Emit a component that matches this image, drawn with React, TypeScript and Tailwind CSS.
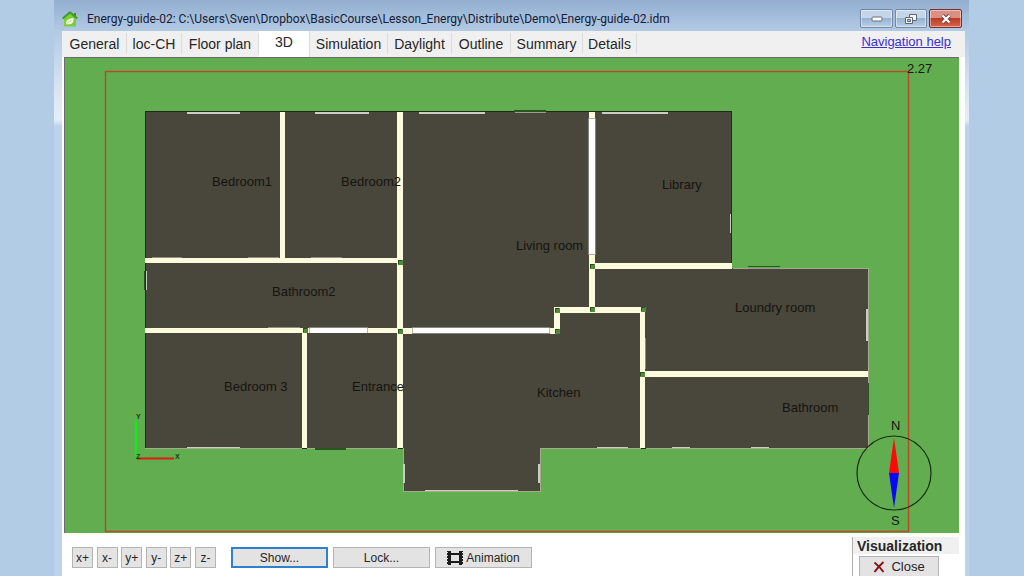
import { useState } from "react";

const tabs = [
  { name: "General", width: "w-16" },
  { name: "loc-CH", width: "w-[55px]" },
  { name: "Floor plan", width: "w-[77px]" },
  { name: "3D", width: "w-[51px]" },
  { name: "Simulation", width: "w-[78px]" },
  { name: "Daylight", width: "w-16" },
  { name: "Outline", width: "w-[59px]" },
  { name: "Summary", width: "w-[72px]" },
  { name: "Details", width: "w-[54px]" },
];

const rooms = [
  { name: "Bedroom1", x: 212, y: 186 },
  { name: "Bedroom2", x: 341, y: 186 },
  { name: "Library", x: 662, y: 189 },
  { name: "Living room", x: 516, y: 250 },
  { name: "Bathroom2", x: 272, y: 296 },
  { name: "Loundry room", x: 735, y: 312 },
  { name: "Bedroom 3", x: 224, y: 391 },
  { name: "Entrance", x: 352, y: 391 },
  { name: "Kitchen", x: 537, y: 397 },
  { name: "Bathroom", x: 782, y: 412 },
];

// x, y, width, height
const walls = [
  [280, 112, 5, 147],
  [397, 112, 6, 336],
  [145, 258, 252, 5],
  [145, 328, 252, 5],
  [302, 333, 5, 115],
  [403, 328, 156, 6],
  [554, 307, 6, 27],
  [554, 307, 91, 6],
  [589, 112, 6, 195],
  [589, 263, 143, 6],
  [640, 307, 5, 141],
  [645, 371, 223, 6],
];

const openings = [
  [309, 328, 59, 5],
  [412, 328, 138, 6],
  [589, 118, 6, 137],
];

const windows = [
  [187, 112, 53, 2],
  [315, 112, 54, 2],
  [419, 112, 66, 2],
  [602, 112, 66, 2],
  [146, 271, 1, 19],
  [730, 214, 1, 19],
  [866, 309, 2, 32],
  [187, 447, 53, 1],
  [597, 447, 31, 1],
  [672, 447, 18, 1],
  [751, 447, 18, 1],
  [403, 464, 2, 19],
  [538, 464, 2, 19],
  [425, 490, 93, 1],
];

const doors = [
  [514, 110, 32, 2],
  [748, 266, 32, 1],
  [315, 448, 31, 2],
  [868, 383, 1, 32],
  [144, 271, 1, 19],
];

const joints = [
  [398, 260],
  [303, 328],
  [398, 329],
  [555, 308],
  [555, 329],
  [590, 264],
  [590, 307],
  [641, 307],
  [640, 372],
];

function Rects({ items, className }: { items: number[][]; className: string }) {
  return (
    <g className={className}>
      {items.map(([x, y, w, h], i) => (
        <rect key={i} x={x} y={y} width={w} height={h} />
      ))}
    </g>
  );
}

function FloorPlan() {
  return (
    <svg
      viewBox="65 58 894 475"
      className="block w-full h-auto bg-[#62ad4f] font-['Liberation_Sans',Arial,sans-serif]"
    >
      <g shapeRendering="crispEdges">
        <path
          d="M145 112H732V268H868V448H540V491H403V448H145Z"
          fill="#49463c"
        />
        <path d="M732.5 268.5H868.5V448.5H540.5V491.5H403.5V448.5H145" fill="none" stroke="#a3ad8b" />
        <path d="M145.5 448V111.5H731.5V263" fill="none" stroke="#1d2b17" />
        <Rects items={walls} className="fill-[#fdfbdc]" />
        <Rects items={openings} className="fill-white" />
        <path
          d="M309.5 328V333M367.5 328V333M412.5 328V334M549.5 328V334M589 118.5H595M589 254.5H595"
          stroke="#b9b8a4"
        />
        <path d="M309 327.5H368M412 327.5H550M412 333.5H550M588.5 118V255M595.5 118V255" stroke="#85857f" />
        <path d="M152 257.5H182M248 257.5H279M311 257.5H342M268 327.5H300M645.5 338V369" stroke="#8f8e82" />
        <Rects items={windows} className="fill-[#c9cdc3]" />
        <path d="M515 112.5H546M748 268.5H780" stroke="#9a9c8e" />
        <Rects items={doors} className="fill-[#2d5224]" />
        {joints.map(([x, y]) => (
          <g key={`${x}-${y}`}>
            <rect x={x} y={y} width="5" height="5" fill="#4f8a3d" />
            <path d={`M${x} ${y + 4}V${y}H${x + 4}`} fill="none" stroke="#2a4f20" />
          </g>
        ))}
        <path d="M302 448h5v1h-5zM398 448h5v1h-5zM641 448h5v1h-5z" fill="#1d2b17" />
      </g>

      <rect x="105.5" y="71.5" width="803" height="460" fill="none" stroke="#b8492a" strokeWidth="1.4" />

      <g fill="#15150f" fontSize="13">
        {rooms.map((room) => (
          <text key={room.name} x={room.x} y={room.y}>
            {room.name}
          </text>
        ))}
        <text x="907" y="73">2.27</text>
        <text x="891" y="430">N</text>
        <text x="891" y="525">S</text>
      </g>

      {/* axes */}
      <path d="M136 420V457" stroke="#00f418" strokeWidth="2" />
      <path d="M137 458.500H174" stroke="#dc1c10" strokeWidth="2" />
      <g fill="#17400f" fontSize="7" fontWeight="bold">
        <text x="136" y="419">Y</text>
        <text x="175" y="459">X</text>
        <text x="136" y="459">Z</text>
      </g>

      {/* compass */}
      <circle cx="894" cy="473" r="37" fill="none" stroke="#14300f" strokeWidth="1.2" />
      <path d="M894 438L899 473H889Z" fill="#ff0808" />
      <path d="M894 508L899 473H889Z" fill="#0808f4" />
    </svg>
  );
}

function HouseIcon() {
  return (
    <svg viewBox="0 0 16 16" className="size-4 shrink-0" aria-hidden="true">
      <path d="M2 7L8 2L14 7V15.500H2Z" fill="#7ecb3c" />
      <path d="M12 2h2v4l-2-2z" fill="#3f8f2b" />
      <path d="M0.700 7.500L8 1.200L15.300 7.500" fill="none" stroke="#3d9a2b" strokeWidth="2" strokeLinejoin="round" />
      <path d="M4 13.500C3.500 9.500 6 7.500 11.500 7C12 11.500 9.500 14 5.500 13.200Z" fill="#f4fbe9" />
      <path d="M3.500 14.500C5 12 7 10.500 9.500 9.200" fill="none" stroke="#8ccb52" strokeWidth="0.800" />
    </svg>
  );
}

function FilmIcon() {
  return (
    <svg viewBox="0 0 16 14" className="w-4 h-[14px]" aria-hidden="true">
      <path d="M0 0H4V14H0ZM12 0H16V14H12Z" fill="#1b1b1b" />
      <path d="M4 3H12M4 11H12" stroke="#1b1b1b" strokeWidth="2" />
      <path d="M0.500 1V14M15.500 1V14" stroke="#dedede" strokeDasharray="1 2" />
    </svg>
  );
}

const captionButton =
  "flex h-[19px] items-center justify-center rounded-[2px] border shadow-[inset_0_0_0_1px_rgba(255,255,255,0.45)]";
const button =
  "flex h-[21px] items-center justify-center border border-[#b4b4b4] bg-[#e3e3e3] text-[#262626]";

export default function App() {
  const [active, setActive] = useState("3D");

  return (
    <div className="min-h-screen bg-[#b2cce6] pl-[54px] pr-[55px] font-['Liberation_Sans',Arial,sans-serif] text-[#262626]">
      <div className="flex min-h-screen flex-col bg-[linear-gradient(to_bottom,#92aed0_0px,#b3cae4_31px,#dfe9f5_100px,#e4edf8_120px,#bdd3ed_126px)]">
        <header className="flex h-[31px] items-center pl-2 pr-[7px] pt-[6px]">
          <HouseIcon />
          <h1 className="ml-[9px] flex-1 truncate font-[Roboto,'Open_Sans',sans-serif] text-[12px] leading-4 text-[#142034]">
            Energy-guide-02: C:\Users\Sven\Dropbox\BasicCourse\Lesson_Energy\Distribute\Demo\Energy-guide-02.idm
          </h1>
          <div className="flex gap-[2px]">
            <button
              aria-label="Minimize"
              className={`${captionButton} w-[33px] border-[#7189a8] bg-[linear-gradient(#c5d6e8_45%,#98b3cf_50%,#b8cfe6)]`}
            >
              <svg viewBox="0 0 12 6" className="w-3 h-[6px]">
                <rect x="1" y="1" width="10" height="4" rx="1" fill="#fff" stroke="#66707c" />
              </svg>
            </button>
            <button
              aria-label="Restore"
              className={`${captionButton} w-8 border-[#7189a8] bg-[linear-gradient(#c5d6e8_45%,#98b3cf_50%,#b8cfe6)]`}
            >
              <svg viewBox="0 0 14 12" className="w-[14px] h-3" fill="#f5f8fb" stroke="#5d6773">
                <path d="M5.500 1.500H12.500V7.500H5.500Z" />
                <path d="M1.500 4.500H8.500V10.500H1.500Z" />
                <path d="M3.500 6.500H6.500V8.500H3.500Z" fill="#b4c6d9" />
              </svg>
            </button>
            <button
              aria-label="Close window"
              className={`${captionButton} w-[33px] border-[#7a2f2c] bg-[linear-gradient(#dc9084_45%,#bf3d28_50%,#d2644a)]`}
            >
              <svg viewBox="0 0 12 10" className="w-3 h-[10px]">
                <path d="M2.500 1.500L9.500 8.500M9.500 1.500L2.500 8.500" stroke="#6f3a38" strokeWidth="4" />
                <path d="M2.500 1.500L9.500 8.500M9.500 1.500L2.500 8.500" stroke="#fff" strokeWidth="2.400" />
              </svg>
            </button>
          </div>
        </header>

        <div className="ml-[8px] mr-[4px] flex flex-1 flex-col bg-white">
          <div className="flex h-[26px] items-start bg-[#f0f0f0]">
            <nav className="flex pl-px" role="tablist">
              {tabs.map((tab) => (
                <button
                  key={tab.name}
                  role="tab"
                  aria-selected={active === tab.name}
                  onClick={() => setActive(tab.name)}
                  className={`${tab.width} whitespace-nowrap border-r border-[#dcdcdc] text-center text-[14px] ${
                    active === tab.name ? "h-[26px] bg-white pb-1 leading-[22px]" : "mt-[2px] h-[21px] leading-[22px]"
                  }`}
                >
                  {tab.name}
                </button>
              ))}
            </nav>
            <a href="#navigation-help" className="ml-auto mr-[14px] text-[13px] leading-[21px] text-[#3a2fd0] underline">
              Navigation help
            </a>
          </div>

          <div className="ml-[2px] mr-[6px] border-l border-t border-[#6c6c6c]">
            <FloorPlan />
          </div>

          <footer className="flex flex-1 items-start text-[12px]">
            <div className="ml-[10px] mt-[14px] flex w-36 justify-between">
              {["x+", "x-", "y+", "y-", "z+", "z-"].map((label) => (
                <button key={label} className={`${button} w-[21px]`}>
                  {label}
                </button>
              ))}
            </div>
            <div className="ml-[15px] mt-[14px] flex gap-[5px]">
              <button className="flex h-[21px] w-[97px] items-center justify-center border-2 border-[#2f80cd] bg-[#e3e3e3]">
                Show...
              </button>
              <button className={`${button} w-[97px]`}>Lock...</button>
              <button className={`${button} w-[97px] gap-[3px]`}>
                <FilmIcon />
                Animation
              </button>
            </div>
            <section className="ml-auto mr-[6px] mt-1 w-[107px] border-l border-[#b0b0b0]">
              <h2 className="bg-[#f0f0f0] pl-1 pt-[2px] text-[14px] font-bold leading-[15px]">Visualization</h2>
              <button className={`${button} ml-[6px] mt-[2px] w-20 gap-[6px] text-[13px]`}>
                <svg viewBox="0 0 12 12" className="size-3" aria-hidden="true">
                  <path d="M1.500 1.500C4 3.500 8 7.500 10.500 11M10.500 1C7 4 4 7.500 1.500 11" fill="none" stroke="#8e1018" strokeWidth="2" />
                </svg>
                Close
              </button>
            </section>
          </footer>
        </div>
      </div>
    </div>
  );
}
